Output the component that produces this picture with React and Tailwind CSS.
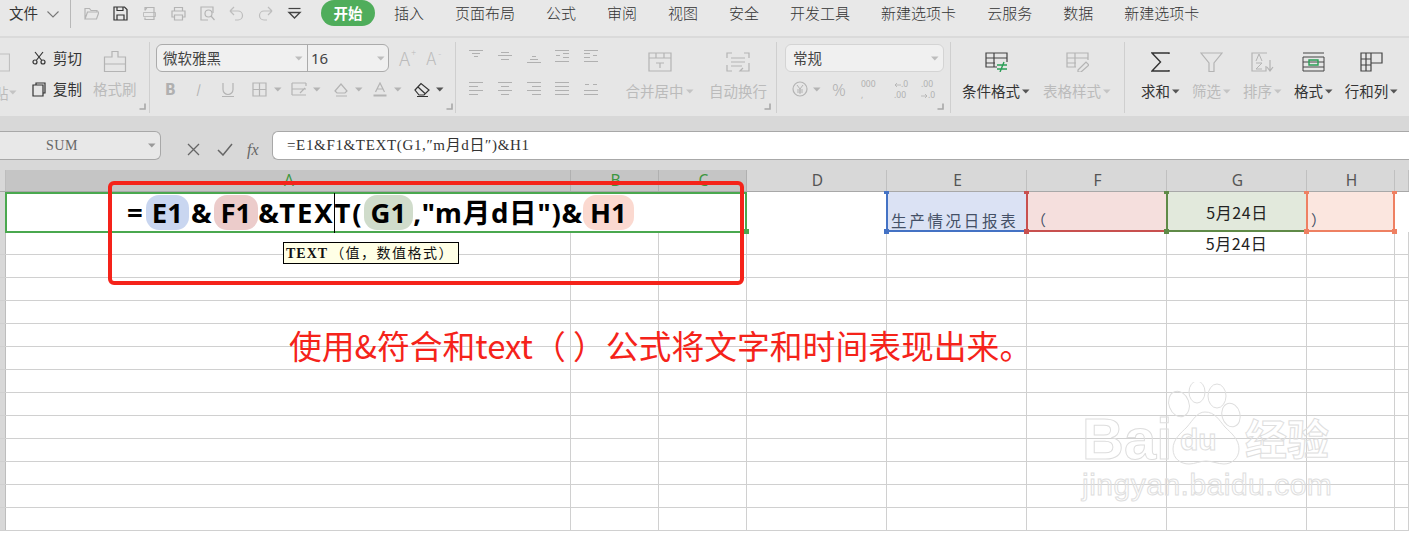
import React from 'react';

const UI = { fontFamily: '"Noto Sans CJK SC", "Noto Sans", sans-serif' };
const SERIF = { fontFamily: '"Liberation Serif", "Noto Sans CJK SC", serif' };

const tabs = ['插入', '页面布局', '公式', '审阅', '视图', '安全', '开发工具', '新建选项卡', '云服务', '数据', '新建选项卡'];
const rowCount = Array.from({ length: 13 }, (_, i) => i);

const Ico = ({ w = 15, h = 15, vb, c = '#b4b4b4', sw = 1.2, children }) => (
  <svg width={w} height={h} viewBox={vb || `0 0 ${w} ${h}`} fill="none" stroke={c} strokeWidth={sw} className="shrink-0">
    {children}
  </svg>
);

const Caret = ({ c = '#b4b4b4' }) => (
  <svg width="8" height="5" viewBox="0 0 8 5" className="shrink-0"><path d="M0 0.5h7.5L3.75 4.5z" fill={c} /></svg>
);

const Corner = ({ className }) => (
  <svg width="7" height="7" viewBox="0 0 7 7" className={`absolute ${className}`}><path d="M6 0.5V6H0.5" fill="none" stroke="#a8a8a8" strokeWidth="1.6" /></svg>
);

// tiny arrow used by the decimal buttons
const Arrow = ({ left }) => (
  <svg width="7" height="6" viewBox="0 0 7 6" className="inline-block shrink-0" fill="none" stroke="#b0b0b0" strokeWidth="0.8">
    <path d={left ? 'M7 3H1M3 1L1 3l2 2' : 'M0 3h6M4 1l2 2-2 2'} />
  </svg>
);

// group divider, a bit shorter than the ribbon
const Sep = () => <span className="absolute right-0 top-[4px] h-[71px] w-px bg-[#cfcfcf]" />;

// single line "text" strokes for the alignment buttons
const Lines = ({ rows }) => (
  <Ico w={15} h={15} c="#b0b0b0" sw={1}>
    {rows.map(([x1, x2, y], i) => <path key={i} d={`M${x1} ${y}.5H${x2}`} />)}
  </Ico>
);

function BigTool({ icon, label, off, caret, w = 'w-[68px]' }) {
  return (
    <div className={`flex flex-col items-center pt-[14px] ${w}`}>
      <div className="flex h-[20px] items-center justify-center">{icon}</div>
      <div className={`mt-[9px] flex h-[20px] items-center gap-[2px] whitespace-nowrap text-[14.5px] ${off ? 'text-[#bbbbbb]' : 'text-[#333333]'}`}>
        {label}
        {caret && <Caret c={off ? '#c4c4c4' : '#555555'} />}
      </div>
    </div>
  );
}

function TitleBar() {
  return (
    <div className="flex h-[36px] items-start bg-[#e8e8e8] text-[14.5px] text-[#333333]">
      <div className="ml-[9px] mt-[1px] h-[24px] leading-[24px]">文件</div>
      <svg width="12" height="7" viewBox="0 0 12 7" className="ml-[9px] mt-[11px]" fill="none" stroke="#777" strokeWidth="1.1"><path d="M0.5 0.5L6 6l5.5-5.5" /></svg>
      <div className="ml-[11px] h-[28px] w-px bg-[#b8b8b8]" />
      <div className="ml-[13px] mt-[6px] flex items-center gap-[14px]">
        <Ico><path d="M1 13V2.5h4.5l1.5 2h6V6M1 13l2.5-7H15l-2.5 7z" /></Ico>
        <Ico c="#333"><path d="M1 1h10.5L14 3.5V14H1zM4 14V9h7v5M4 1v3.5h6V1" /></Ico>
        <Ico><path d="M3 4.5V1.5h9v12H3v-2M5 1.5L3 4.5" /><path d="M1.5 6.5h12v4h-12z" strokeWidth="0.8" /></Ico>
        <Ico><path d="M3.5 5V1.5h8V5M3.5 11H1V5h13v6h-2.5M3.5 9h8v5h-8z" /></Ico>
        <Ico><path d="M13 7V1H1v13h7" /><circle cx="8.5" cy="7.5" r="3.5" /><path d="M11 10l3.5 4" /></Ico>
        <Ico c="#bdbdbd"><path d="M1 5h8a4.5 4.5 0 0 1 0 9H6M1 5l4-4M1 5l4 4" /></Ico>
        <Ico c="#bdbdbd"><path d="M14 5H6a4.5 4.5 0 0 0 0 9h3M14 5l-4-4M14 5l-4 4" /></Ico>
        <Ico c="#444"><path d="M1.5 2.5h12" /><path d="M2 6.5h11L7.5 12z" strokeWidth="1.4" /></Ico>
      </div>
      <div className="ml-[19px] flex h-[26px] w-[54px] items-center justify-center rounded-[13px] bg-[#4fad5b] font-bold text-white">开始</div>
      <div className="ml-[19px] mt-[1px] flex h-[24px] items-center gap-[31px] whitespace-nowrap text-[15px] font-light">
        {tabs.map((t, i) => <span key={i}>{t}</span>)}
      </div>
    </div>
  );
}

function Ribbon() {
  return (
    <div className="flex h-[78px] bg-[#e6e6e6]">
      {/* clipboard */}
      <div className="relative flex h-[78px] w-[150px] shrink-0 overflow-hidden">
        <div className="w-[32px] shrink-0 pt-[12px]">
          <Ico w={10} h={22} c="#c0c0c0"><path d="M-6 4H9.5V21H-6" /></Ico>
          <div className="mt-[10px] flex items-center text-[14.5px] text-[#bbbbbb]"><span className="-ml-[6px]">贴</span><Caret c="#c4c4c4" /></div>
        </div>
        <div className="flex w-[61px] flex-col gap-[3px] pt-[6px] text-[14.5px] text-[#333333]">
          <div className="flex h-[28px] items-center gap-[7px]">
            <Ico c="#333" w={14} h={14}><circle cx="3" cy="11" r="2" /><circle cx="11" cy="11" r="2" /><path d="M4.2 9.5L11 1M9.8 9.5L3 1" /></Ico>
            <span>剪切</span>
          </div>
          <div className="flex h-[28px] items-center gap-[7px]">
            <Ico c="#333" w={14} h={15}><path d="M4 3V1h9v10h-2M1 3h10v11H1z" /></Ico>
            <span>复制</span>
          </div>
        </div>
        <div className="flex flex-col items-center pt-[12px]">
          <Ico w={24} h={23} c="#b4b4b4"><path d="M9 1.5h6V7h7.5v7h-21V7H9zM1.5 14v7.5h21V14" /></Ico>
          <div className="mt-[6px] h-[20px] whitespace-nowrap text-[14.5px] leading-[20px] text-[#bbbbbb]">格式刷</div>
        </div>
        <Corner className="right-[4px] bottom-[6px]" />
        <Sep />
      </div>

      {/* font */}
      <div className="relative h-[78px] w-[306px] shrink-0 pl-[6px] pt-[6px]">
        <div className="flex h-[28px] items-center">
          <div className="flex h-[28px] w-[233px] overflow-hidden rounded-[6px] border border-[#ababab] bg-[#f0f0f0] text-[14.5px] text-[#444444]">
            <div className="flex w-[151px] items-center justify-between border-r border-[#ababab] pl-[6px] pr-[4px]">微软雅黑<Caret c="#bdbdbd" /></div>
            <div className="flex flex-1 items-center justify-between pl-[3px] pr-[3px] text-[15px]" style={{ fontFamily: '"Noto Sans", sans-serif' }}>16<Caret c="#bdbdbd" /></div>
          </div>
          <span className="relative ml-[10px] text-[19px] font-light text-[#bbbbbb]">A<span className="absolute -right-[6px] top-[2px] text-[9px]">+</span></span>
          <span className="relative ml-[16px] text-[17px] font-light text-[#bbbbbb]">A<span className="absolute -right-[5px] top-[2px] text-[9px]">-</span></span>
        </div>
        <div className="mt-[3px] flex h-[28px] items-center pl-[9px] text-[#b0b0b0]">
          <span className="w-[30px] text-[15px] font-black">B</span>
          <span className="w-[27px] text-[16px] italic font-light">I</span>
          <div className="w-[30px]"><Ico w={12} h={15}><path d="M1 1v6.5a5 5 0 0 0 10 0V1M0 14.5h12" /></Ico></div>
          <div className="flex w-[39px] items-center gap-[7px]"><Ico><path d="M1 1h13v13H1zM7.5 1v13M1 7.5h13" /></Ico><Caret /></div>
          <div className="flex w-[42px] items-center gap-[6px]"><Ico w={16}><path d="M1 1h14M1 7h14M1 13h14M1 1v12M15 1v3M9 11l5-5" /></Ico><Caret /></div>
          <div className="flex w-[40px] items-center gap-[6px]"><Ico w={16}><path d="M2 9l6-7 6 7-2 2H4zM3 14h11" /></Ico><Caret /></div>
          <div className="flex w-[41px] items-center gap-[7px]"><Ico w={14}><path d="M2.5 10L7 1l4.5 9M4 7h6" /><path d="M0.5 13.5h13" strokeWidth="2" /></Ico><Caret /></div>
          <div className="flex items-center gap-[6px]"><Ico w={16} c="#333"><path d="M1 8l6-6.5L15 8l-5 5H5zM4 5l7.5 7M3 14.5h11" /></Ico><Caret c="#555" /></div>
        </div>
        <Corner className="right-[3px] bottom-[6px]" />
        <Sep />
      </div>

      {/* alignment */}
      <div className="relative flex h-[78px] w-[321px] shrink-0">
        <div className="grid h-[66px] w-[159px] shrink-0 grid-cols-5 content-between pl-[13px] pt-[11px] pb-[8px] pr-[2px]">
          <Lines rows={[[0, 14, 1], [3, 11, 4], [5, 9, 7]]} />
          <Lines rows={[[3, 11, 3], [0, 14, 6], [3, 11, 10]]} />
          <Lines rows={[[5, 9, 7], [3, 11, 10], [0, 14, 13]]} />
          <Lines rows={[[0, 14, 1], [8, 14, 4], [1, 5, 6], [8, 14, 8], [0, 14, 12]]} />
          <Lines rows={[[0, 14, 1], [0, 6, 4], [9, 13, 6], [0, 6, 8], [0, 14, 12]]} />
          <Lines rows={[[0, 14, 1], [0, 9, 5], [0, 14, 9], [0, 9, 13]]} />
          <Lines rows={[[0, 14, 1], [3, 11, 5], [0, 14, 9], [3, 11, 13]]} />
          <Lines rows={[[0, 14, 1], [5, 14, 5], [0, 14, 9], [5, 14, 13]]} />
          <Lines rows={[[0, 14, 1], [0, 14, 5], [0, 14, 9], [0, 14, 13]]} />
          <Lines rows={[[1, 5, 3], [9, 13, 3], [0, 14, 9], [0, 14, 13]]} />
        </div>
        <BigTool off caret w="w-[65px] ml-[12px]" label="合并居中" icon={<Ico w={24} h={20}><path d="M1 1h22v18H1zM1 6h22M8 1v5M16 1v5M8 11h8M12 11v5" /></Ico>} />
        <BigTool off w="w-[60px] ml-[16px]" label="自动换行" icon={<Ico w={24} h={20}><path d="M6 1H1v5M18 1h5v5M1 13v6h5M5 6h14M5 10h14M5 14h11M23 11v8H14l3-3" /></Ico>} />
        <Corner className="right-[6px] bottom-[6px]" />
        <Sep />
      </div>

      {/* number */}
      <div className="relative h-[78px] w-[174px] shrink-0 pl-[8px] pt-[6px]">
        <div className="flex h-[28px] w-[159px] items-center justify-between rounded-[6px] border border-[#d4d4d4] bg-[#f0f0f0] pl-[7px] pr-[4px] text-[14.5px] text-[#444444]">常规<Caret c="#bdbdbd" /></div>
        <div className="mt-[3px] flex h-[28px] items-center pl-[7px] text-[#b0b0b0]" style={{ fontFamily: '"Noto Sans", sans-serif' }}>
          <div className="flex w-[40px] items-center gap-[5px]">
            <Ico w={16} h={16}><circle cx="8" cy="8" r="7" /><path d="M5 4l3 4 3-4M8 8v5M5 9h6M5 11h6" strokeWidth="1" /></Ico><Caret />
          </div>
          <span className="w-[29px] text-[17px] font-light leading-none">%</span>
          <div className="w-[33px] text-left text-[8.5px] leading-[11px]">000<br />,</div>
          <div className="w-[27px] text-left text-[8.5px] leading-[11px]"><Arrow left />.0<br />.00</div>
          <div className="w-[22px] text-left text-[8.5px] leading-[11px]">.00<br /><Arrow />.0</div>
        </div>
        <Corner className="right-[7px] bottom-[6px]" />
        <Sep />
      </div>

      {/* styles */}
      <div className="relative flex h-[78px] w-[174px] shrink-0">
        <BigTool caret w="w-[68px] ml-[11px]" label="条件格式" icon={
          <Ico w={23} h={20} c="#444"><path d="M12 15H1V1h21v9M1 6h21M1 11h9M9 1v14" /><path d="M12 13h10M12 17h10M19 10l-4 10" stroke="#2a9d55" strokeWidth="1.4" /></Ico>
        } />
        <BigTool off caret w="w-[68px] ml-[13px]" label="表格样式" icon={
          <Ico w={23} h={20}><path d="M10 15H1V1h21v7M1 6h21M1 11h9M9 1v14M12 18l8-8 3 3-8 7h-3z" /></Ico>
        } />
        <Sep />
      </div>

      {/* editing */}
      <div className="flex pl-[10px]">
        <BigTool caret w="w-[51px]" label="求和" icon={<Ico w={19} h={20} c="#333" sw={1.4}><path d="M18 2V1H1l8.5 9L1 19h17v-1" /></Ico>} />
        <BigTool off caret w="w-[51px]" label="筛选" icon={<Ico w={23} h={20}><path d="M1 1h21l-8 10v8.5h-5V11z" /></Ico>} />
        <BigTool off caret w="w-[51px]" label="排序" icon={<Ico w={23} h={20}><path d="M16 1H1v18h14V14M19 8v11M16 15l3 4 3-4" /><path d="M5 9l3-7 3 7M5 11h6l-6 6h6" strokeWidth="1" /></Ico>} />
        <BigTool caret w="w-[51px]" label="格式" icon={<Ico w={23} h={20} c="#444"><path d="M1 1h21M1 5h21v14H1zM1 10h21M1 15h21" strokeWidth="1" /><path d="M7 8h9v5H7z" stroke="#2a9d55" strokeWidth="1.4" /></Ico>} />
        <BigTool caret w="w-[65px]" label="行和列" icon={<Ico w={23} h={20} c="#444"><path d="M1 1h21v10H11v8H1zM1 7h10M1 13h10M6 1v18M11 1v10" /></Ico>} />
      </div>
    </div>
  );
}

function FormulaBar() {
  return (
    <div className="flex h-[54px] bg-[#d8d8d8] pt-[15px]">
      <div className="relative flex h-[29px] w-[161px] shrink-0 items-center justify-between rounded-r-[6px] border border-l-0 border-[#a8a8a8] bg-[#e8e8e8] pr-[4px]">
        <span className="w-[124px] text-center text-[14px] tracking-[0.5px] text-[#666666]" style={SERIF}>SUM</span>
        <Caret c="#999" />
      </div>
      <div className="flex w-[111px] shrink-0 -translate-y-[1px] items-center pl-[26px]">
        <Ico w={13} h={13} c="#666" sw={1.3}><path d="M1 1l11 11M12 1L1 12" /></Ico>
        <div className="ml-[17px]"><Ico w={16} h={13} c="#666" sw={1.5}><path d="M1 7l5 5L15 1" /></Ico></div>
        <span className="ml-[14px] text-[16px] italic text-[#666666]" style={{ fontFamily: '"Liberation Serif", serif' }}>fx</span>
      </div>
      <div className="flex h-[29px] flex-1 items-center whitespace-pre rounded-l-[6px] border border-r-0 border-[#a8a8a8] bg-white pl-[14px] text-[15px] tracking-[0.65px] text-[#333333]" style={SERIF}>
        =E1&amp;F1&amp;TEXT(G1,″m月d日″)&amp;H1
      </div>
    </div>
  );
}

const colW = ['w-[565px]', 'w-[88px]', 'w-[88px]', 'w-[140px]', 'w-[140px]', 'w-[140px]', 'w-[140px]', 'w-[88px]', 'flex-1'];
const colNames = ['A', 'B', 'C', 'D', 'E', 'F', 'G', 'H', ''];

function ColumnHeader() {
  return (
    <div className="flex h-[22px] border-b border-[#a8a8a8] bg-[#d8d8d8]" style={{ fontFamily: '"Noto Sans", sans-serif' }}>
      <div className="w-[6px] shrink-0 border-r border-[#bdbdbd]" />
      {colNames.map((n, i) => (
        <div
          key={i}
          className={`${colW[i]} flex items-center justify-center pl-[2px] text-[15.5px] leading-none ${i < 3 ? 'border-r border-[#b0b0b0] bg-[#c5c5c5] text-[#3c963f]' : 'border-r border-[#c0c0c0] text-[#555555]'}`}
        >
          {n}
        </div>
      ))}
    </div>
  );
}

// corner squares on a referenced cell
const RefCell = ({ w, bg, line, children, className = '' }) => (
  <div className={`relative h-full ${w} shrink-0 ${bg} ${className}`}>
    {children}
    <span className={`absolute -left-px top-0 h-full w-[2px] ${line}`} />
    <span className={`absolute -left-px bottom-0 h-[2px] w-full ${line}`} />
    <span className={`absolute -left-[3px] -top-[1px] h-[3px] w-[5px] ${line}`} />
    <span className={`absolute -left-[3px] -bottom-[2px] h-[5px] w-[5px] ${line}`} />
  </div>
);

const Chip = ({ bg, px = 'px-[6px]', children }) => (
  <span className={`flex h-[35px] items-center rounded-[13px] ${px} ${bg}`}>{children}</span>
);

function FirstRow() {
  return (
    <div className="flex h-[40px]">
      <div className="w-[6px] shrink-0 border-r border-[#bdbdbd] bg-[#d8d8d8]" />
      {/* merged A1:C1 being edited */}
      <div className="relative -ml-px flex h-[41px] w-[742px] shrink-0 items-center whitespace-nowrap border-2 border-[#4aa84f] pl-[120px] text-[27.5px] font-bold leading-none text-black" style={{ fontFamily: '"Noto Sans", "Noto Sans CJK SC", sans-serif' }}>
        <span className="mr-[3px]">=</span>
        <Chip bg="bg-[#c9d6f0]">E1</Chip>
        <span className="mx-[2px]">&amp;</span>
        <Chip bg="bg-[#eccccb]" px="px-[7px]">F1</Chip>
        <span className="tracking-[1.9px]">&amp;TEXT(</span>
        <span className="absolute left-[327px] -top-px h-[40px] w-px bg-black" />
        <Chip bg="bg-[#d0dccb]" px="px-[7px]">G1</Chip>
        <span className="tracking-[0.8px]">,"m月d日")&amp;</span>
        <Chip bg="bg-[#fbd9d0]" px="px-[7px]">H1</Chip>
        <span className="absolute -right-[4px] -bottom-[3px] h-[5px] w-[5px] bg-[#4aa84f]" />
      </div>
      <div className="h-full w-[140px] shrink-0 border-r border-[#d0d0d0]" />
      <RefCell w="w-[140px]" bg="bg-[#dbe2f4]" line="bg-[#4472c4]">
        <div className="absolute bottom-0 left-[4px] whitespace-nowrap text-[15.5px] tracking-[2.7px] text-[#445066]" style={UI}>生产情况日报表</div>
      </RefCell>
      <RefCell w="w-[140px]" bg="bg-[#f5dfdd]" line="bg-[#c8504f]">
        <div className="absolute bottom-[1px] left-[4px] text-[15px] text-[#445066]" style={UI}>（</div>
      </RefCell>
      <RefCell w="w-[140px]" bg="bg-[#e2e9dc]" line="bg-[#5f8a47]">
        <div className="flex h-[40px] items-center justify-center text-[16px] tracking-[0.6px] text-[#222222]" style={UI}>5月24日</div>
      </RefCell>
      <RefCell w="w-[88px]" bg="bg-[#fbe6df]" line="bg-[#ee8062]" className="border-r-2 border-[#ee8062]">
        <div className="absolute bottom-[1px] left-[4px] text-[15px] text-[#445066]" style={UI}>）</div>
        <span className="absolute -right-[4px] -top-[1px] h-[3px] w-[5px] bg-[#ee8062]" />
        <span className="absolute -right-[4px] -bottom-[2px] h-[5px] w-[5px] bg-[#ee8062]" />
      </RefCell>
    </div>
  );
}

function Sheet() {
  return (
    <div className="relative flex-1 overflow-hidden bg-white">
      <ColumnHeader />
      <FirstRow />
      {rowCount.map((r) => (
        <div key={r} className="flex h-[23px] border-b border-[#d0d0d0]">
          <div className="w-[6px] shrink-0 border-r border-[#bdbdbd] bg-[#d8d8d8]" />
          {colW.map((w, i) => (
            <div key={i} className={`${w} flex items-center justify-center border-r border-[#d0d0d0] text-[16px] leading-none tracking-[0.6px] text-[#222222]`} style={UI}>
              {r === 0 && i === 6 ? '5月24日' : ''}
            </div>
          ))}
        </div>
      ))}

      {/* function hint */}
      <div className="absolute left-[283px] top-[72px] flex h-[22px] w-[176px] items-center whitespace-nowrap border border-black bg-[#ffffe6] pl-[2px] text-[14px] text-[#111111]" style={SERIF}>
        <b className="tracking-[1px]">TEXT</b><span className="ml-[2px] tracking-[1.5px]">（值，数值格式）</span>
      </div>

      {/* annotation drawn on top of the screenshot */}
      <div className="absolute left-[108px] top-[11px] h-[104px] w-[636px] rounded-[6px] border-[4px] border-[#f5231a]" />
      <div className="absolute left-[289px] top-[150px] whitespace-nowrap text-[32.8px] leading-[50px] text-[#f5231a]" style={UI}>
        使用&amp;符合和text（ ）公式将文字和时间表现出来。
      </div>

      {/* watermark */}
      <div className="absolute left-[1082px] top-[212px] h-[120px] w-[255px] text-transparent [-webkit-text-stroke:1px_#dedede]" style={{ fontFamily: '"Liberation Sans", sans-serif' }}>
        <span className="absolute left-0 top-[28px] text-[58px] font-bold leading-none">Bai</span>
        <svg width="78" height="84" viewBox="0 0 78 84" className="absolute left-[85px] top-0" fill="none" stroke="#dedede" strokeWidth="1">
          <ellipse cx="12" cy="22" rx="10" ry="13" transform="rotate(-20 12 22)" />
          <ellipse cx="30" cy="10" rx="8" ry="11" />
          <ellipse cx="50" cy="14" rx="9" ry="12" />
          <ellipse cx="64" cy="33" rx="9" ry="12" transform="rotate(-15 64 33)" />
          <path d="M38 30c-8 0-12 8-18 15-6 6-14 12-14 22 0 10 8 15 16 15 6 0 11-3 17-3s12 3 18 3c8 0 15-6 15-15 0-10-8-16-14-22-6-7-10-15-20-15z" />
        </svg>
        <span className="absolute left-[98px] top-[43px] text-[30px] font-bold leading-none">du</span>
        <span className="absolute left-[163px] top-[34px] text-[42px] font-bold leading-none" style={UI}>经验</span>
        <span className="absolute left-0 top-[88px] text-[30px] leading-none tracking-[0.5px]">jingyan.baidu.com</span>
      </div>
    </div>
  );
}

export default function App() {
  return (
    <div className="flex h-[533px] w-[1409px] flex-col overflow-hidden bg-white" style={UI}>
      <TitleBar />
      <div className="h-[2px] bg-[#dadada]" />
      <Ribbon />
      <FormulaBar />
      <Sheet />
    </div>
  );
}
